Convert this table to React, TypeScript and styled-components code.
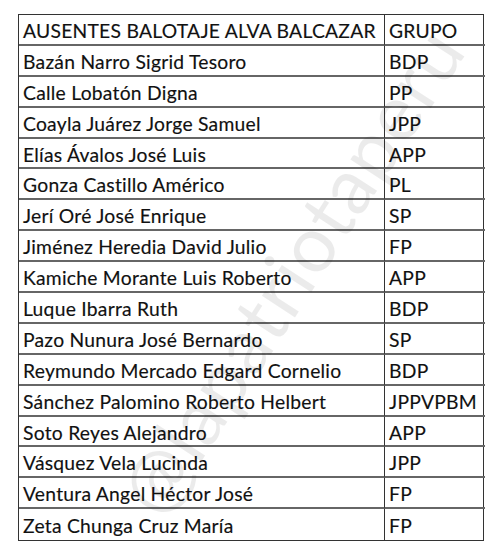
import React from 'react';
import styled, { createGlobalStyle } from 'styled-components';

const GlobalStyle = createGlobalStyle`
  html, body {
    margin: 0;
    padding: 0;
    background: #ffffff;
  }
`;

const Page = styled.div`
  position: relative;
  width: 501px;
  height: 553px;
  padding: 14px 0 0 18px;
  box-sizing: border-box;
  overflow: hidden;
`;

const Sheet = styled.div`
  display: grid;
  grid-template-columns: 365px 101px;
  grid-auto-rows: 30.9px;
  width: 466px;
  border: 1px solid #333;
  box-sizing: border-box;
`;

const Cell = styled.div<{ $last?: boolean; $right?: boolean }>`
  display: flex;
  align-items: center;
  padding: 2px 0 0 4px;
  box-sizing: border-box;
  font-family: Lato, 'Liberation Sans', sans-serif;
  font-size: 19.3px;
  letter-spacing: 0.25px;
  color: #111;
  -webkit-text-stroke: 0.15px #111;
  white-space: nowrap;
  border-bottom: ${(p) => (p.$last ? 'none' : '2px solid #666')};
  border-left: ${(p) => (p.$right ? '1px solid #333' : 'none')};
`;

const Watermark = styled.div`
  position: absolute;
  left: 290px;
  top: 270px;
  transform: translate(-50%, -50%) rotate(-57deg);
  font-family: Lato, 'Liberation Sans', sans-serif;
  font-size: 78px;
  letter-spacing: 1px;
  color: rgba(0, 0, 0, 0.08);
  white-space: nowrap;
  pointer-events: none;
`;

const rows: [string, string][] = [
  ['AUSENTES BALOTAJE ALVA BALCAZAR', 'GRUPO'],
  ['Bazán Narro Sigrid Tesoro', 'BDP'],
  ['Calle Lobatón Digna', 'PP'],
  ['Coayla Juárez Jorge Samuel', 'JPP'],
  ['Elías Ávalos José Luis', 'APP'],
  ['Gonza Castillo Américo', 'PL'],
  ['Jerí Oré José Enrique', 'SP'],
  ['Jiménez Heredia David Julio', 'FP'],
  ['Kamiche Morante Luis Roberto', 'APP'],
  ['Luque Ibarra Ruth', 'BDP'],
  ['Pazo Nunura José Bernardo', 'SP'],
  ['Reymundo Mercado Edgard Cornelio', 'BDP'],
  ['Sánchez Palomino Roberto Helbert', 'JPPVPBM'],
  ['Soto Reyes Alejandro', 'APP'],
  ['Vásquez Vela Lucinda', 'JPP'],
  ['Ventura Angel Héctor José', 'FP'],
  ['Zeta Chunga Cruz María', 'FP'],
];

const App = () => {
  return (
    <Page>
      <GlobalStyle />
      <Sheet>
        {rows.map(([name, group], i) => {
          const last = i === rows.length - 1;
          return (
            <React.Fragment key={name}>
              <Cell $last={last}>{name}</Cell>
              <Cell $last={last} $right>
                {group}
              </Cell>
            </React.Fragment>
          );
        })}
      </Sheet>
      <Watermark>@lapatriotaperu</Watermark>
    </Page>
  );
};

export default App;
